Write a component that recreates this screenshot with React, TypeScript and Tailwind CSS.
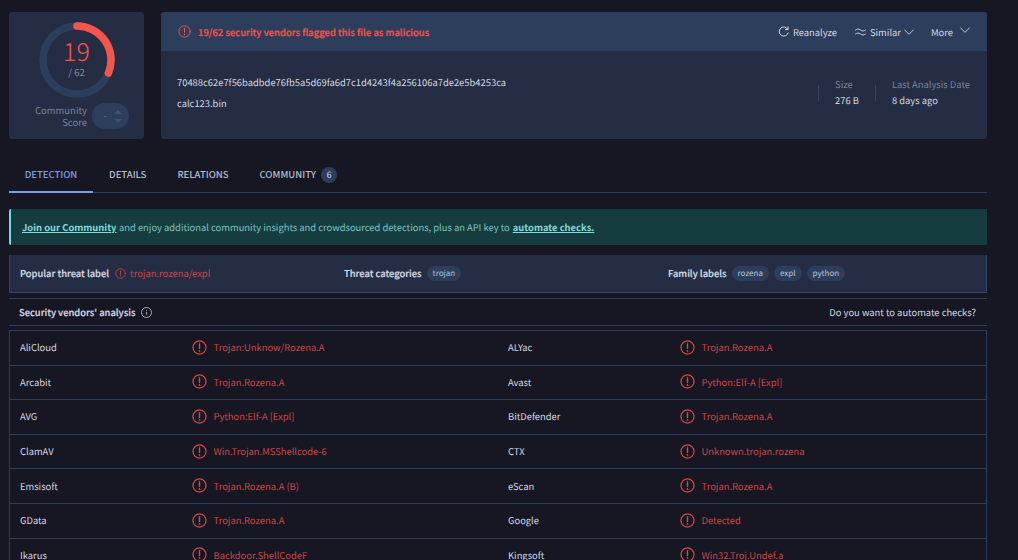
import React from "react";

const Alert = ({ size = 15, sw = 1.2 }: { size?: number; sw?: number }) => (
  <svg width={size} height={size} viewBox="0 0 16 16" fill="none" stroke="currentColor" strokeWidth={sw} strokeLinecap="round" className="shrink-0">
    <circle cx="8" cy="8" r="7" />
    <path d="M8 4v5" strokeWidth={sw + 0.2} />
    <path d="M8 11.6v.1" strokeWidth={sw + 0.5} />
  </svg>
);

const Chevron = () => (
  <svg width="10" height="6" viewBox="0 0 10 6" fill="none" stroke="currentColor" strokeWidth="0.9" className="shrink-0">
    <path d="M0.3 0.6L5 5.3L9.7 0.6" />
  </svg>
);

const rows: [string, string, string, string][] = [
  ["AliCloud", "Trojan:Unknow/Rozena.A", "ALYac", "Trojan.Rozena.A"],
  ["Arcabit", "Trojan.Rozena.A", "Avast", "Python:Elf-A [Expl]"],
  ["AVG", "Python:Elf-A [Expl]", "BitDefender", "Trojan.Rozena.A"],
  ["ClamAV", "Win.Trojan.MSShellcode-6", "CTX", "Unknown.trojan.rozena"],
  ["Emsisoft", "Trojan.Rozena.A (B)", "eScan", "Trojan.Rozena.A"],
  ["GData", "Trojan.Rozena.A", "Google", "Detected"],
  ["Ikarus", "Backdoor.ShellCodeF", "Kingsoft", "Win32.Troj.Undef.a"],
];

const Pill = ({ children }: { children: React.ReactNode }) => (
  <span className="h-[15px] px-[6px] rounded-full bg-[#2d3e5c] text-[#b9c3d6] text-[8px] flex items-center">{children}</span>
);

const Cell = ({ name, result }: { name: string; result: string }) => (
  <div className="flex items-center flex-1 min-w-0">
    <span className="w-[171.5px] shrink-0 text-[#d5d9e2]">{name}</span>
    <span className="text-[#d84845] flex items-center gap-[7px]">
      <Alert size={15} sw={1.3} />
      <span className="text-[#d04545] whitespace-nowrap">{result}</span>
    </span>
  </div>
);

export default function App() {
  return (
    <div className="w-[1018px] h-[560px] overflow-hidden bg-[#161723] text-[9.4px] text-[#d5d9e2] [text-rendering:geometricPrecision] font-['Noto_Sans_CJK_SC',sans-serif] pl-[9px] pr-[31px] pt-[12px]">
      <div className="flex gap-[17px] h-[127px]">
        <div className="w-[135px] rounded-[3px] bg-[#242d43] flex flex-col items-center pt-[10px]">
          <div className="relative w-[76px] h-[76px]">
            <svg width="76" height="76" viewBox="0 0 76 76" fill="none">
              <circle cx="38" cy="38" r="34" stroke="#2d3e5c" strokeWidth="7.5" />
              <path d="M38 4 A34 34 0 0 1 69.4 51.1" stroke="#f7544c" strokeWidth="7.5" strokeLinecap="round" />
            </svg>
            <div className="absolute inset-0 flex flex-col items-center">
              <span className="text-[#f7544c] text-[25px] font-light leading-[26px] mt-[16px]">19</span>
              <span className="text-[#8690a8] text-[9.5px] leading-[12px] mt-[2px]">/ 62</span>
            </div>
          </div>
          <div className="flex items-center gap-[5px] mt-[5px] pl-[11px]">
            <span className="text-[#79839b] text-[9.5px] leading-[12px] text-right">Community<br />Score</span>
            <div className="relative w-[37px] h-[26px] rounded-full bg-[#2d3e5c]">
              <span className="absolute left-[12px] top-[6px] text-[#8690a8] text-[8px]">.</span>
              <svg width="10" height="22" viewBox="0 0 10 22" className="absolute right-[6px] top-[2px]" fill="#3f5173">
                <path d="M1 9L5 5L9 9Z" />
                <path d="M1 14L5 18L9 14Z" />
              </svg>
            </div>
          </div>
        </div>

        <div className="flex-1 rounded-[3px] bg-[#242d43] flex flex-col">
          <div className="h-[39px] bg-[#2d3e5c] rounded-t-[3px] flex items-center pl-[17px] pr-[17px] pt-[1px]">
            <span className="text-[#f7544c] flex items-center gap-[7px]">
              <Alert size={13} sw={1.1} />
              <span className="font-medium tracking-[0.04px] [-webkit-text-stroke:0.2px]">19/62 security vendors flagged this file as malicious</span>
            </span>
            <div className="ml-auto flex items-center text-[#d5d9e2]">
              <svg width="11" height="12" viewBox="0 0 11 12" fill="none" stroke="currentColor" strokeWidth="1" strokeLinecap="round" className="mr-[4px]">
                <path d="M9.8 3.2A4.6 4.6 0 1 0 10.2 7" />
                <path d="M10 0.8v2.8H7.4" />
              </svg>
              <span>Reanalyze</span>
              <svg width="11" height="8" viewBox="0 0 11 8" fill="none" stroke="currentColor" strokeWidth="0.9" strokeLinecap="round" className="ml-[18px] mr-[4px]">
                <path d="M0.5 2C2.5 0.7 3.5 0.7 5.5 2S8.5 3.3 10.5 2" />
                <path d="M0.5 6C2.5 4.7 3.5 4.7 5.5 6S8.5 7.3 10.5 6" />
              </svg>
              <span>Similar</span>
              <span className="ml-[3px]"><Chevron /></span>
              <span className="ml-[17px]">More</span>
              <span className="ml-[7px] -mt-[3px]"><Chevron /></span>
            </div>
          </div>
          <div className="flex-1 flex pl-[16px] pr-[17px] pt-[24px]">
            <div className="flex flex-col gap-[7px] text-[#d5d9e2]">
              <span className="leading-[14px]">70488c62e7f56badbde76fb5a5d69fa6d7c1d4243f4a256106a7de2e5b4253ca</span>
              <span className="leading-[14px]">calc123.bin</span>
            </div>
            <div className="ml-auto flex h-[32px] mt-[2px]">
              <div className="w-px h-[16px] mt-[8px] bg-[#36435f] mr-[16px]" />
              <div className="flex flex-col gap-[2px] leading-[14px]">
                <span className="text-[#79839b]">Size</span>
                <span>276 B</span>
              </div>
              <div className="w-px h-[16px] mt-[8px] bg-[#36435f] mx-[16px]" />
              <div className="flex flex-col gap-[2px] leading-[14px]">
                <span className="text-[#79839b]">Last Analysis Date</span>
                <span>8 days ago</span>
              </div>
            </div>
          </div>
        </div>
      </div>

      <div className="mt-[18px] h-[36px] flex items-stretch border-b border-[#2d3e5c] text-[9.5px] font-medium text-[#b4bccd]">
        <div className="w-[84px] -mb-px flex items-center justify-center border-b-2 border-[#7aa0e6] text-[#7aa0e6]">DETECTION</div>
        <div className="ml-[16px] flex items-center">DETAILS</div>
        <div className="ml-[31px] flex items-center">RELATIONS</div>
        <div className="ml-[31px] flex items-center">
          COMMUNITY
          <span className="ml-[5px] w-[16px] h-[16px] rounded-full bg-[#2d3e5c] flex items-center justify-center text-[9px]">6</span>
        </div>
      </div>

      <div className="mt-[16px] h-[36px] rounded-l-[2px] bg-[#153c3e] border-l-2 border-[#77dbdc] text-[#7ec4c4] flex items-center pl-[11px]">
        <span className="font-bold underline text-[#82dcdc]">Join our Community</span>
        <span className="ml-[2.5px]">and enjoy additional community insights and crowdsourced detections, plus an API key to</span>
        <span className="ml-[3px] font-bold underline text-[#82dcdc]">automate checks.</span>
      </div>

      <div className="mt-[10px] h-[38px] bg-[#242d43] border-x border-b border-[#36456a] flex items-center">
        <div className="w-[334px] flex items-center pl-[10px]">
          <span className="font-medium [-webkit-text-stroke:0.2px]">Popular threat label</span>
          <span className="ml-[6px] text-[#d04545] flex items-center gap-[4px]">
            <Alert size={11} sw={1.1} />
            trojan.rozena/expl
          </span>
        </div>
        <div className="w-[324px] flex items-center gap-[5px]">
          <span className="font-medium [-webkit-text-stroke:0.2px]">Threat categories</span>
          <Pill>trojan</Pill>
        </div>
        <div className="flex items-center gap-[5px]">
          <span className="font-medium [-webkit-text-stroke:0.2px]">Family labels</span>
          <Pill>rozena</Pill>
          <Pill>expl</Pill>
          <Pill>python</Pill>
        </div>
      </div>

      <div className="mt-[5px] h-[28px] border-y border-[#2d3e5c] flex items-center pl-[10px] pr-[11px]">
        <span className="font-medium [-webkit-text-stroke:0.2px]">Security vendors' analysis</span>
        <svg width="11" height="11" viewBox="0 0 11 11" fill="none" stroke="currentColor" strokeWidth="0.8" className="ml-[6px] text-[#c5cad6]">
          <circle cx="5.5" cy="5.5" r="5" />
          <path d="M5.5 4.8v3M5.5 3v.7" />
        </svg>
        <span className="ml-auto">Do you want to automate checks?</span>
      </div>

      <div className="mt-[4px] border-x border-t border-[#2d3e5c]">
        {rows.map((r) => (
          <div key={r[0]} className="h-[34.6px] border-b border-[#2d3e5c] flex items-center pl-[10px] pb-[1px]">
            <Cell name={r[0]} result={r[1]} />
            <div className="w-[478px] shrink-0">
              <Cell name={r[2]} result={r[3]} />
            </div>
          </div>
        ))}
      </div>
    </div>
  );
}
